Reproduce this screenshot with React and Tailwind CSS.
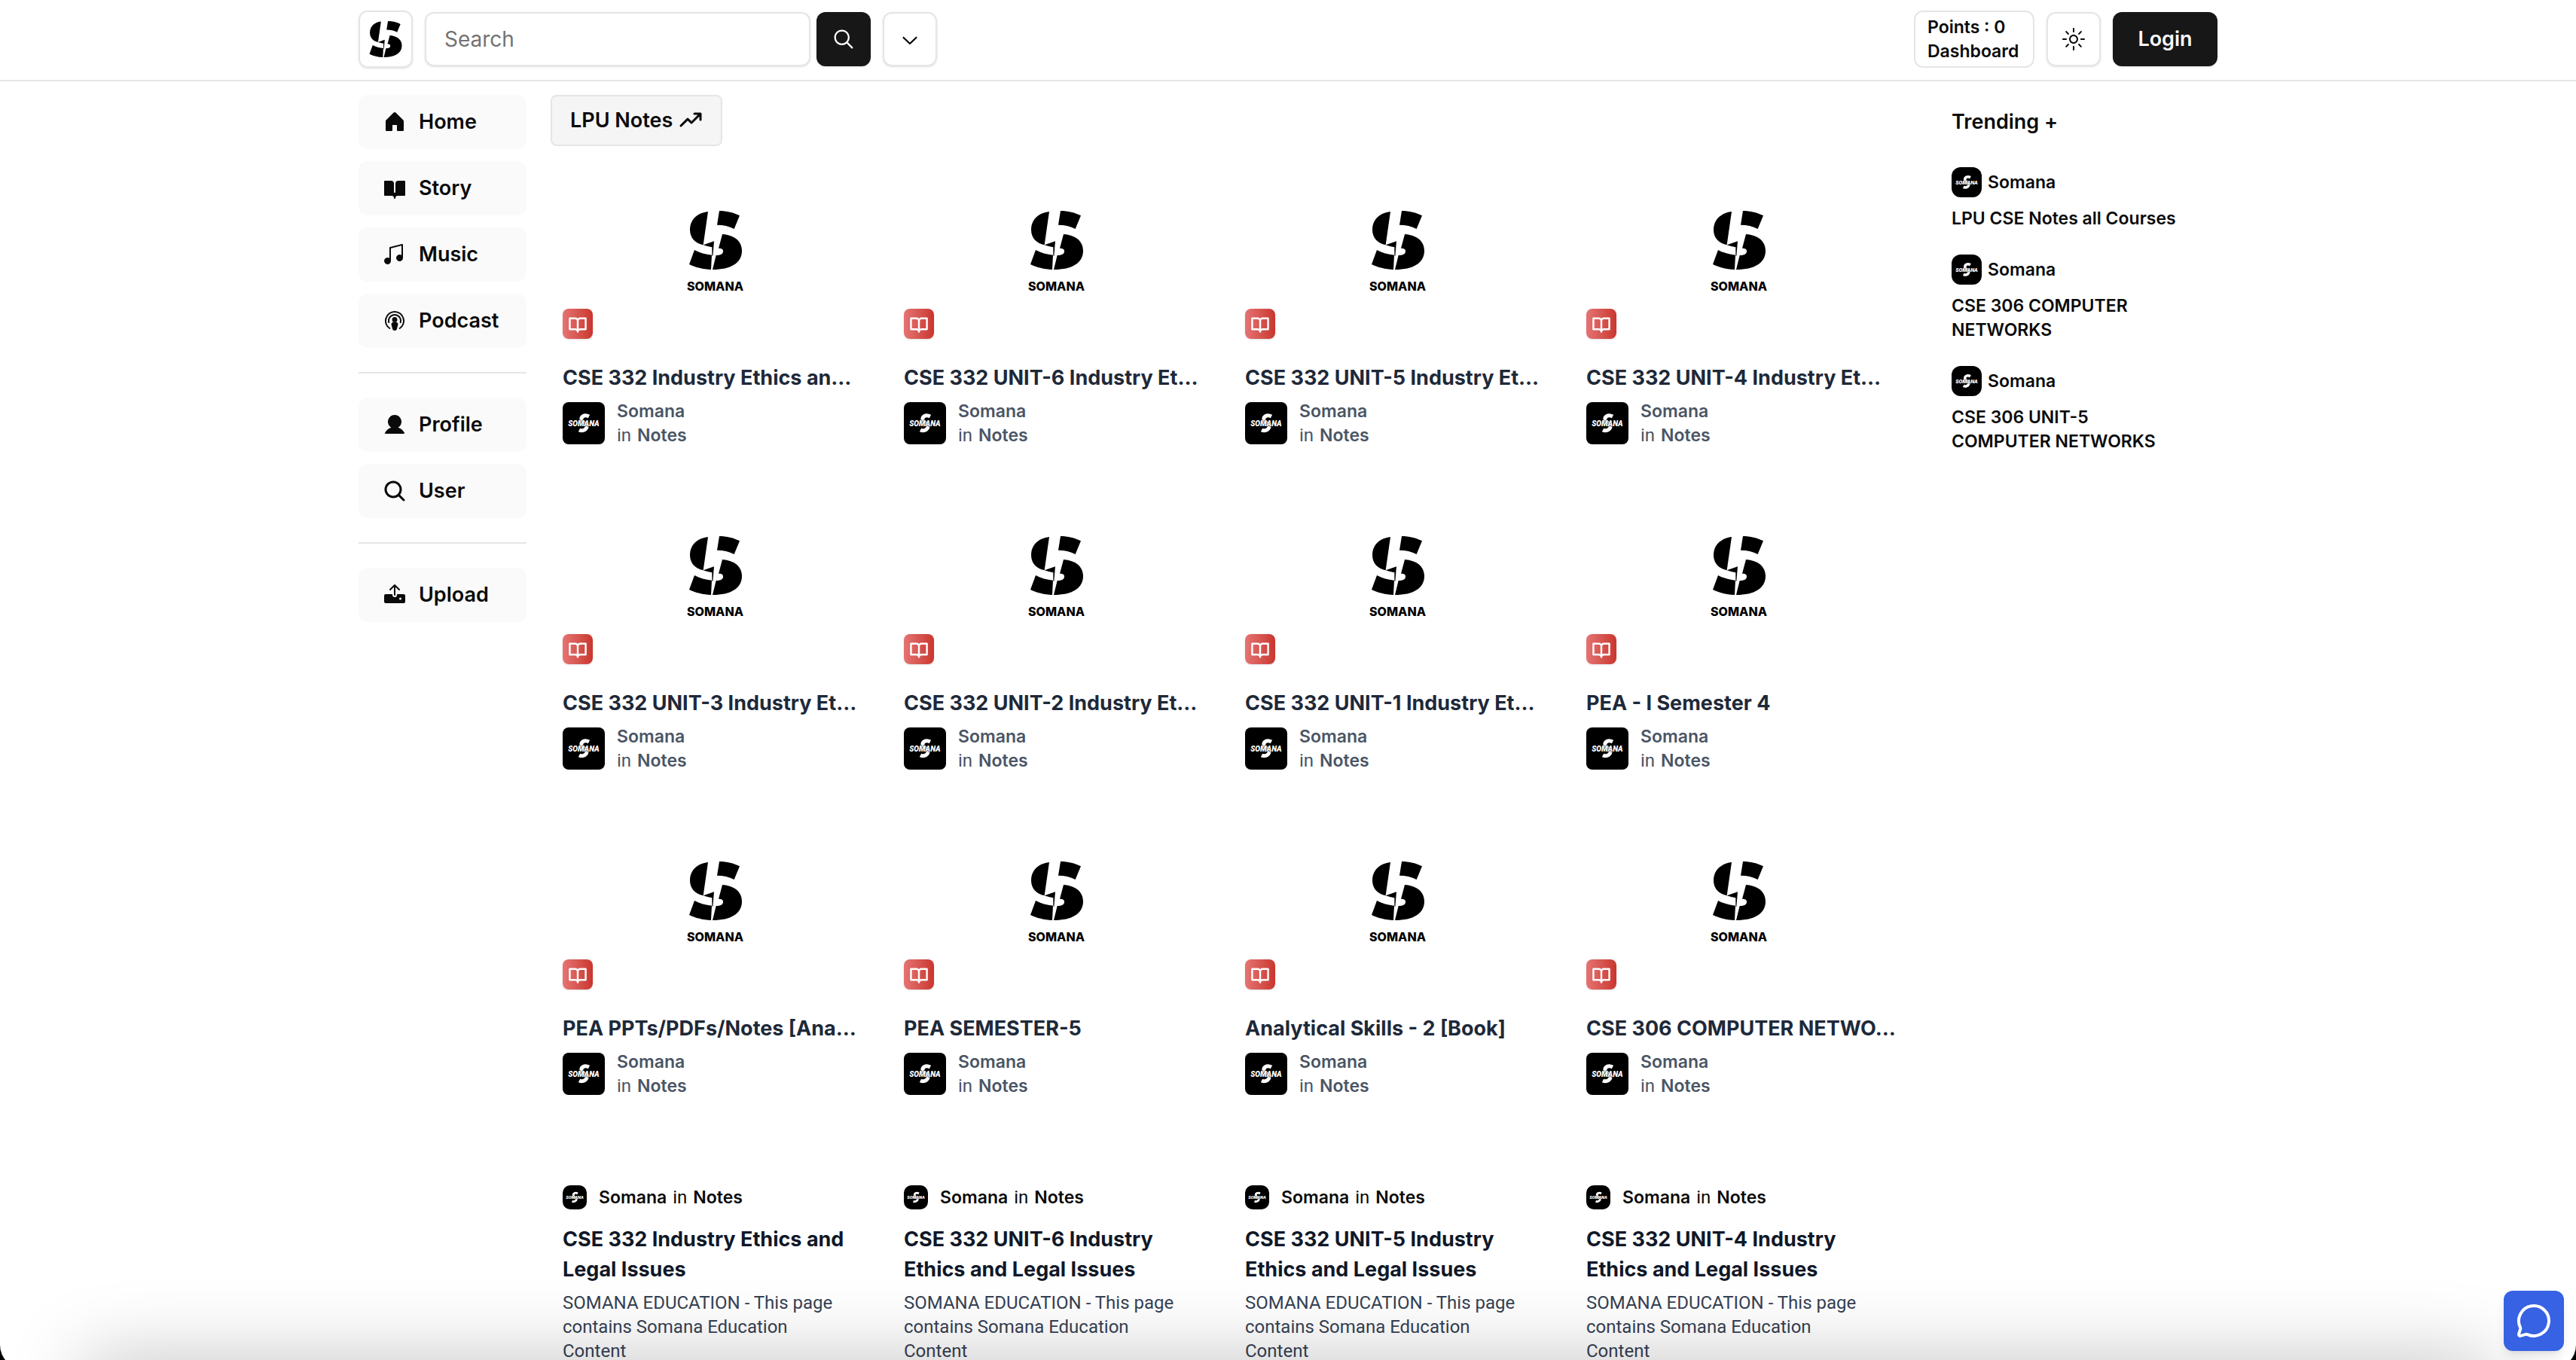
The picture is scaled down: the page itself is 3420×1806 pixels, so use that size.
import {
  PiApplePodcastsLogoFill,
  PiBookOpenBold,
  PiBookOpenFill,
  PiHouseFill,
  PiMagnifyingGlassBold,
  PiMusicNotesSimpleFill,
  PiTrendUpBold,
  PiUploadFill,
  PiUserFill,
} from "react-icons/pi";
import { RxChevronDown, RxMagnifyingGlass, RxSun } from "react-icons/rx";
import { MessageCircle } from "lucide-react";

const navGroups = [
  [
    { label: "Home", Icon: PiHouseFill },
    { label: "Story", Icon: PiBookOpenFill },
    { label: "Music", Icon: PiMusicNotesSimpleFill },
    { label: "Podcast", Icon: PiApplePodcastsLogoFill },
  ],
  [
    { label: "Profile", Icon: PiUserFill },
    { label: "User", Icon: PiMagnifyingGlassBold },
  ],
  [{ label: "Upload", Icon: PiUploadFill }],
];

const notes = [
  "CSE 332 Industry Ethics an…",
  "CSE 332 UNIT-6 Industry Et…",
  "CSE 332 UNIT-5 Industry Et…",
  "CSE 332 UNIT-4 Industry Et…",
  "CSE 332 UNIT-3 Industry Et…",
  "CSE 332 UNIT-2 Industry Et…",
  "CSE 332 UNIT-1 Industry Et…",
  "PEA - I Semester 4",
  "PEA PPTs/PDFs/Notes [Ana…",
  "PEA SEMESTER-5",
  "Analytical Skills - 2 [Book]",
  "CSE 306 COMPUTER NETWO…",
];

const articles = [
  "CSE 332 Industry Ethics and Legal Issues",
  "CSE 332 UNIT-6 Industry Ethics and Legal Issues",
  "CSE 332 UNIT-5 Industry Ethics and Legal Issues",
  "CSE 332 UNIT-4 Industry Ethics and Legal Issues",
];

const trending = [
  "LPU CSE Notes all Courses",
  "CSE 306 COMPUTER NETWORKS",
  "CSE 306 UNIT-5 COMPUTER NETWORKS",
];

function Logo({ className }) {
  return (
    <svg viewBox="75 57 210 234" className={className} fill="black" aria-hidden="true">
      <path d="M150 60C108 65 78 91 78 132c0 33 21 54 53 61Z" />
      <path d="M131 193l43-15-5 60-3-4v-32c-12-2-24-5-35-9Z" />
      <path d="M195 57c29 0 58 7 81 19l-22 53c-20-11-43-16-68-16Z" />
      <path d="M207 150c50 4 78 29 78 66 0 49-44 75-117 75l14-57c18 0 28-6 28-16 0-9-6-12-18-12Z" />
      <path d="M96 213c21 11 44 18 69 20l-3 58c-32-1-62-9-87-21Z" />
    </svg>
  );
}

function Avatar({ className }) {
  return (
    <svg viewBox="0 0 56 56" className={className} role="img" aria-label="Somana">
      <rect width="56" height="56" fill="black" />
      <path
        d="M35 19C29 16 24 19 25 24c1 4 8 4 7 9-1 4-6 6-10 4"
        fill="none"
        stroke="white"
        strokeWidth="5"
      />
      <text
        x="28"
        y="32"
        textAnchor="middle"
        fontFamily="Roboto, sans-serif"
        fontSize="10"
        fontWeight="900"
        fontStyle="italic"
        fill="white"
        stroke="black"
        strokeWidth="1"
        paintOrder="stroke"
      >
        SOMANA
      </text>
    </svg>
  );
}

function Header() {
  return (
    <header className="border-b-2 border-neutral-200 bg-white">
      <div className="mx-auto flex max-w-[2500px] items-center justify-between px-4 pt-[14px] pb-4">
        <div className="flex items-center gap-4">
          <a
            href="#"
            aria-label="Somana home"
            className="flex h-[76px] w-[72px] items-center justify-center rounded-xl border-2 border-neutral-200 shadow-sm"
          >
            <Logo className="h-12 w-11" />
          </a>
          <form className="flex gap-2">
            <input
              type="search"
              placeholder="Search"
              aria-label="Search"
              className="h-18 w-[512px] rounded-xl border-2 border-neutral-200 px-6 text-[28px] shadow-sm placeholder:text-neutral-500"
            />
            <button
              type="button"
              aria-label="Submit search"
              className="flex size-18 items-center justify-center rounded-xl bg-neutral-900 text-white shadow-sm"
            >
              <RxMagnifyingGlass size={34} />
            </button>
          </form>
          <button
            type="button"
            aria-label="More"
            className="flex size-18 items-center justify-center rounded-xl border-2 border-neutral-200 shadow-sm"
          >
            <RxChevronDown size={32} />
          </button>
        </div>
        <div className="flex items-center gap-4">
          <a
            href="#"
            className="min-w-40 rounded-xl border-2 border-neutral-200 px-4 py-1 text-[23px] leading-8 font-semibold"
          >
            <span className="block">Points : 0</span>
            <span className="block">Dashboard</span>
          </a>
          <button
            type="button"
            aria-label="Toggle theme"
            className="flex size-18 items-center justify-center rounded-xl border-2 border-neutral-200 shadow-sm"
          >
            <RxSun size={30} />
          </button>
          <button
            type="button"
            className="h-18 min-w-[139px] rounded-xl bg-neutral-900 px-8 text-[27px] font-semibold text-neutral-50 shadow-sm"
          >
            Login
          </button>
        </div>
      </div>
    </header>
  );
}

function Sidebar() {
  return (
    <nav className="divide-y-2 divide-neutral-200">
      {navGroups.map((group) => (
        <ul key={group[0].label} className="flex flex-col gap-4 py-8 first:pt-0">
          {group.map(({ label, Icon }) => (
            <li key={label}>
              <a
                href="#"
                className="flex h-18 items-center gap-4 rounded-xl bg-neutral-50 px-8 text-[27px] font-semibold"
              >
                <Icon size={32} className="shrink-0" />
                {label}
              </a>
            </li>
          ))}
        </ul>
      ))}
    </nav>
  );
}

function NoteCard({ title }) {
  return (
    <article className="p-4">
      <div className="relative flex h-60 flex-col items-center pt-[54px]">
        <Logo className="h-[78px] w-[70px]" />
        <span className="mt-2 text-[16px] leading-7 font-extrabold text-black">SOMANA</span>
        <span className="absolute bottom-4 left-0 flex size-10 items-center justify-center rounded-lg bg-linear-to-r from-[#e57373] to-[#c9352d] text-white shadow-sm">
          <PiBookOpenBold size={26} />
        </span>
      </div>
      <h2 className="mt-4 text-[27px] leading-10 font-bold whitespace-nowrap text-gray-800">
        {title}
      </h2>
      <div className="mt-2 flex items-center gap-4 text-[23px] leading-8 text-gray-600">
        <Avatar className="size-14 rounded-lg" />
        <div>
          <p className="font-semibold">Somana</p>
          <p className="flex gap-2">
            <span className="font-[Roboto,sans-serif] text-[24px] font-normal">in</span>
            <span className="font-semibold">Notes</span>
          </p>
        </div>
      </div>
    </article>
  );
}

function ArticleCard({ title }) {
  return (
    <article className="p-4">
      <div className="flex items-center text-[23px] leading-8">
        <Avatar className="mr-4 size-8 rounded-[10px]" />
        <p className="flex gap-2">
          <span className="font-semibold">Somana</span>
          <span className="font-[Roboto,sans-serif] text-[24px]">in</span>
          <span className="font-semibold">Notes</span>
        </p>
      </div>
      <h2 className="mt-5 text-[27px] leading-10 font-bold text-gray-900">{title}</h2>
      <p className="mt-2 pr-8 font-[Roboto,sans-serif] text-[24px] leading-8 text-gray-700">
        SOMANA EDUCATION - This page contains Somana Education Content
      </p>
    </article>
  );
}

function Trending() {
  return (
    <aside className="pt-4 pr-12 pl-8">
      <h2 className="text-[27px] leading-10 font-semibold">Trending +</h2>
      <ul className="mt-10 flex flex-col gap-8 text-[23px] leading-8 font-semibold">
        {trending.map((title) => (
          <li key={title}>
            <a href="#" className="block">
              <span className="flex items-center gap-2">
                <Avatar className="size-10 rounded-xl" />
                Somana
              </span>
              <span className="mt-3 block">{title}</span>
            </a>
          </li>
        ))}
      </ul>
    </aside>
  );
}

export default function App() {
  return (
    <div className="min-h-screen bg-white font-[Inter,sans-serif] text-neutral-950">
      <Header />
      <div className="mx-auto grid max-w-[2500px] grid-cols-[223px_minmax(0,1fr)_385px] gap-8 px-4 pt-[18px]">
        <Sidebar />
        <main>
          <button
            type="button"
            className="flex h-[68px] items-center gap-2 rounded-lg border-2 border-neutral-200 bg-neutral-100 px-6 text-[27px] font-semibold"
          >
            LPU Notes <PiTrendUpBold size={32} />
          </button>
          <section className="mt-4 grid grid-cols-4 gap-x-4 gap-y-8">
            {notes.map((title) => (
              <NoteCard key={title} title={title} />
            ))}
          </section>
          <section className="mt-21 grid grid-cols-4 gap-x-4">
            {articles.map((title) => (
              <ArticleCard key={title} title={title} />
            ))}
          </section>
        </main>
        <Trending />
      </div>

      {/* soft shade rising from the window's bottom edge */}
      <div className="pointer-events-none fixed inset-x-28 top-full h-20 shadow-[0_0_100px_rgba(0,0,0,0.25)]" />

      <button
        type="button"
        aria-label="Open chat"
        className="fixed right-4 bottom-3 flex size-20 items-center justify-center rounded-xl bg-[#3662e3] text-white shadow-lg"
      >
        <MessageCircle size={48} />
      </button>

      {/* rounded window corners */}
      <div className="pointer-events-none fixed inset-x-0 top-0 -bottom-3 rounded-b-[32px] shadow-[0_0_0_40px_black]" />
    </div>
  );
}
